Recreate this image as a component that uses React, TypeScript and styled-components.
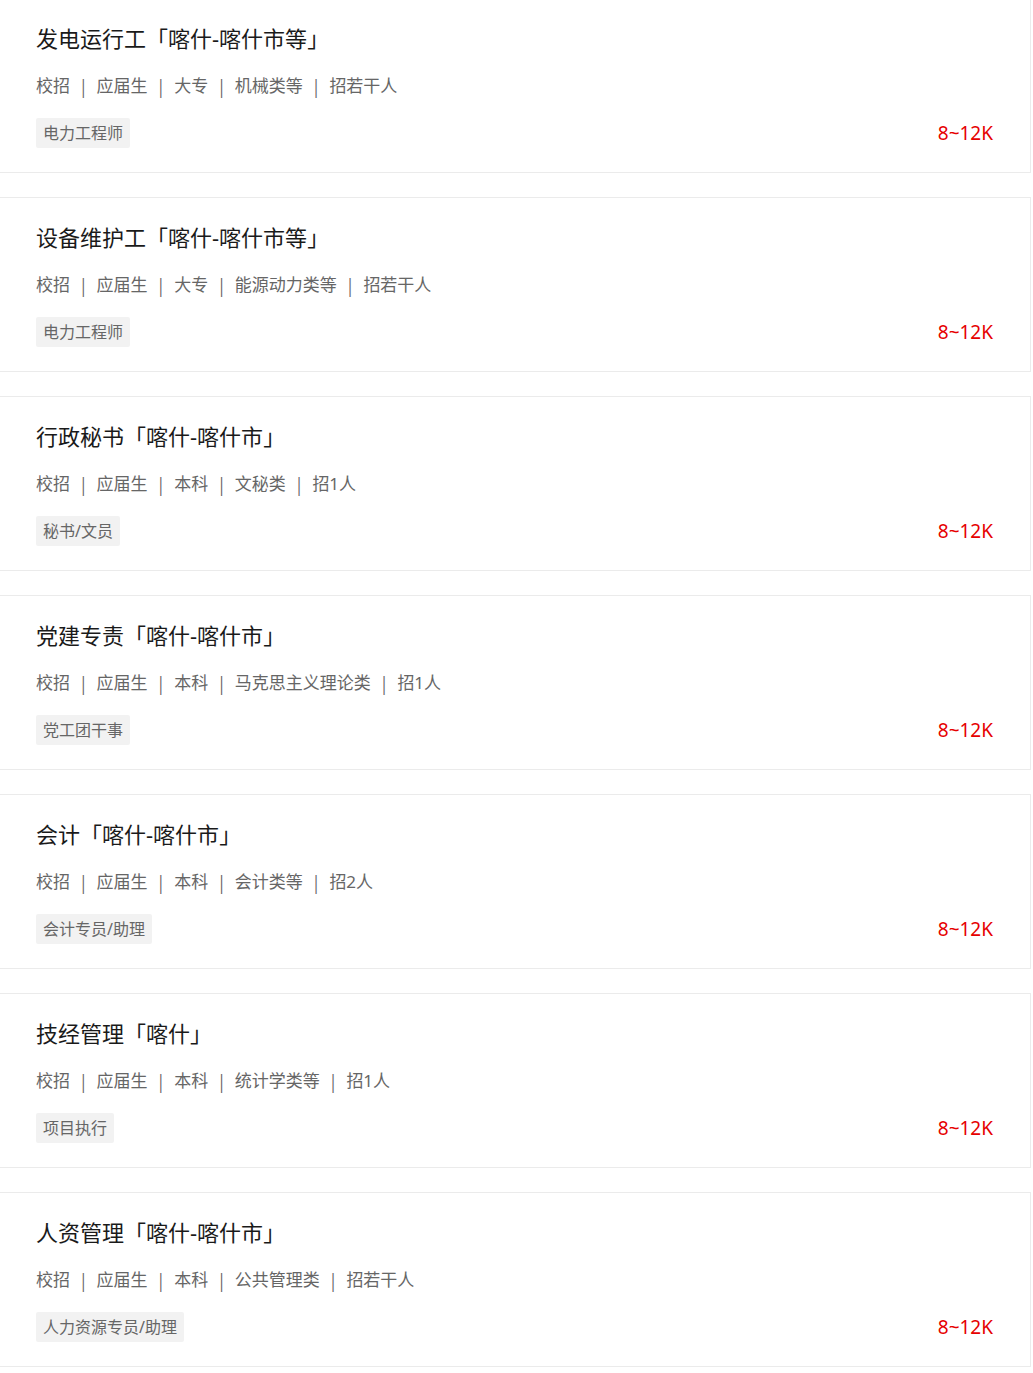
import React from 'react';

// styles
import styled, { createGlobalStyle } from 'styled-components';

type JobType = {
  title: string;
  place: string;
  meta: string[];
  tag: string;
  salary: string;
};

const jobs: JobType[] = [
  { title: '发电运行工', place: '喀什-喀什市等', meta: ['校招', '应届生', '大专', '机械类等', '招若干人'], tag: '电力工程师', salary: '8~12K' },
  { title: '设备维护工', place: '喀什-喀什市等', meta: ['校招', '应届生', '大专', '能源动力类等', '招若干人'], tag: '电力工程师', salary: '8~12K' },
  { title: '行政秘书', place: '喀什-喀什市', meta: ['校招', '应届生', '本科', '文秘类', '招1人'], tag: '秘书/文员', salary: '8~12K' },
  { title: '党建专责', place: '喀什-喀什市', meta: ['校招', '应届生', '本科', '马克思主义理论类', '招1人'], tag: '党工团干事', salary: '8~12K' },
  { title: '会计', place: '喀什-喀什市', meta: ['校招', '应届生', '本科', '会计类等', '招2人'], tag: '会计专员/助理', salary: '8~12K' },
  { title: '技经管理', place: '喀什', meta: ['校招', '应届生', '本科', '统计学类等', '招1人'], tag: '项目执行', salary: '8~12K' },
  { title: '人资管理', place: '喀什-喀什市', meta: ['校招', '应届生', '本科', '公共管理类', '招若干人'], tag: '人力资源专员/助理', salary: '8~12K' },
];

const JobCard = ({ job }: { job: JobType }) => {
  return (
    <Card>
      <Title>
        {job.title}「{job.place}」
      </Title>
      <Meta>
        {job.meta.map((item, i) => (
          <React.Fragment key={item + i}>
            {i > 0 && <Divider>|</Divider>}
            <span>{item}</span>
          </React.Fragment>
        ))}
      </Meta>
      <Bottom>
        <Tag>{job.tag}</Tag>
        <Salary>{job.salary}</Salary>
      </Bottom>
    </Card>
  );
};

const App = () => {
  return (
    <>
      <GlobalStyle />
      <List>
        {jobs.map((job, i) => (
          <JobCard key={i} job={job} />
        ))}
      </List>
    </>
  );
};

const GlobalStyle = createGlobalStyle`
  * {
    box-sizing: border-box;
  }

  body {
    margin: 0;
    background: #fff;
    font-family: 'Noto Sans', 'Noto Sans CJK SC', sans-serif;
  }
`;

const List = styled.main`
  width: 1031px;
  margin-top: -2px;

  display: flex;
  flex-direction: column;
  gap: 24px;
`;

const Card = styled.section`
  background: #fff;
  border: 1px solid #ebebeb;
  border-left: 0;

  padding: 24px 37px 24px 36px;
`;

const Title = styled.h2`
  margin: 0;
  height: 30px;

  color: #1a1a1a;
  font-size: 22px;
  font-weight: 400;
  line-height: 30px;
  white-space: nowrap;
`;

const Meta = styled.div`
  margin-top: 21px;
  height: 24px;

  display: flex;
  align-items: center;

  color: #666;
  font-size: 17px;
  line-height: 24px;
`;

const Divider = styled.span`
  margin: 0 11px 0 11px;
  font-family: 'Noto Sans CJK SC', sans-serif;
  font-size: 17px;
`;

const Bottom = styled.div`
  margin-top: 20px;

  display: flex;
  justify-content: space-between;
  align-items: center;
`;

const Tag = styled.span`
  height: 30px;
  padding: 0 7px;

  background: #f2f2f2;
  border-radius: 2px;

  color: #666;
  font-size: 16px;
  line-height: 30px;
`;

const Salary = styled.span`
  color: #e60000;
  font-size: 19px;
  line-height: 24px;
`;

export default App;
